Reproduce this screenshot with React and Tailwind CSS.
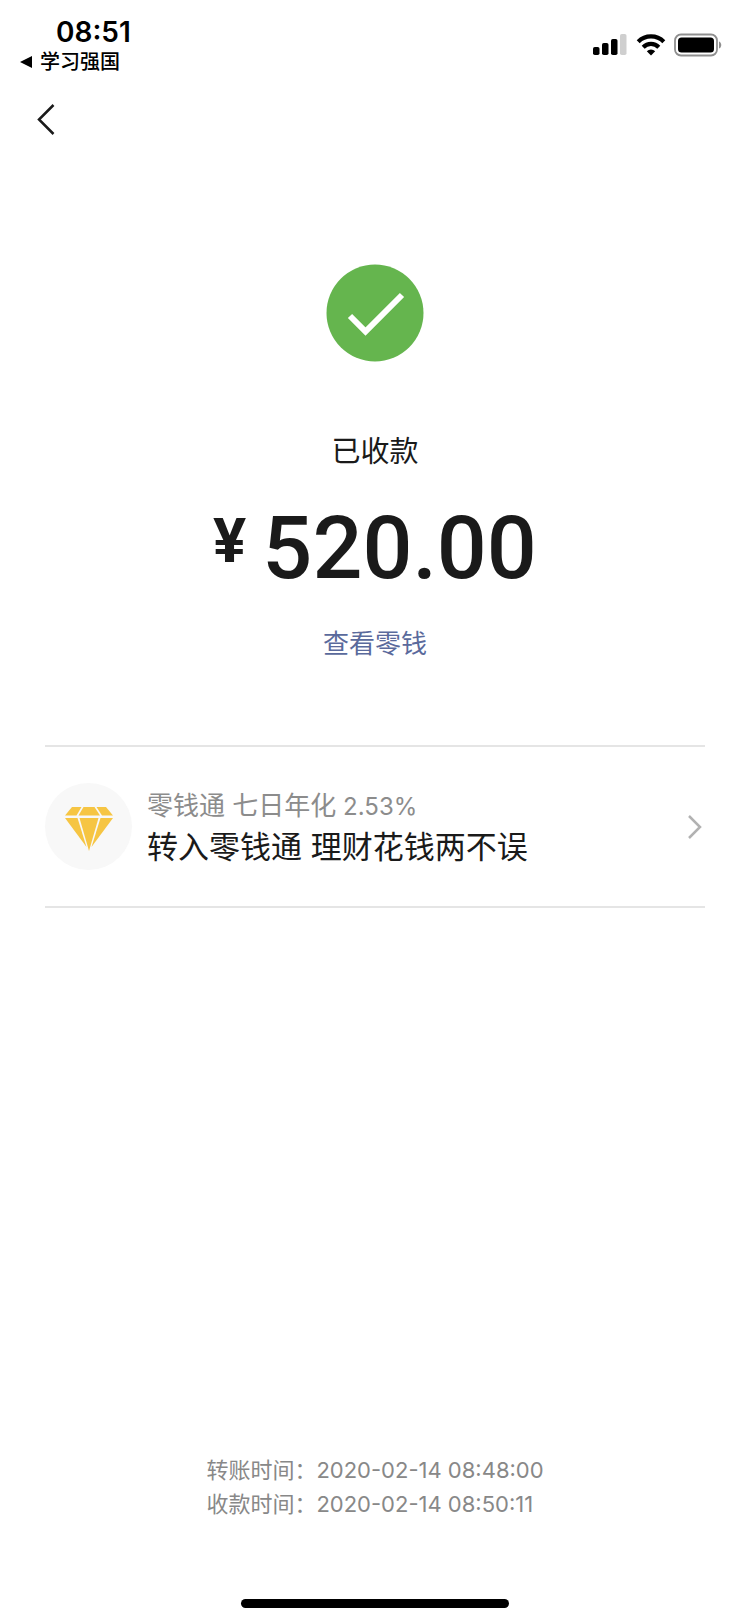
import React from 'react';

const times = [
    { label: '转账时间：', value: '2020-02-14 08:48:00' },
    { label: '收款时间：', value: '2020-02-14 08:50:11' },
];

const StatusBar = () => {
    return (
        <header className="flex items-start justify-between pl-5 pr-7 pt-4 text-black">
            <div>
                <div className="pl-9 text-[28px] leading-8 font-semibold">08:51</div>
                <a href="#back-to-app" className="flex items-center gap-2 text-[20px] leading-7 font-medium">
                    <svg width="12" height="14" viewBox="0 0 12 14" fill="currentColor">
                        <path d="M12 1v12L0 7z" />
                    </svg>
                    学习强国
                </a>
            </div>
            <div className="flex items-center gap-2 pt-[17px]">
                {/* signal */}
                <svg width="35" height="24" viewBox="0 0 35 24" fill="currentColor">
                    <rect x="0" y="14" width="6.5" height="8" rx="1.8" />
                    <rect x="9" y="10" width="6.5" height="12" rx="1.8" />
                    <rect x="18" y="6" width="6.5" height="16" rx="1.8" />
                    <rect x="27" y="1" width="6.5" height="21" rx="1.8" fill="#cfcfcf" />
                </svg>
                {/* wifi */}
                <svg width="30" height="24" viewBox="0 0 30 24" fill="none" stroke="currentColor" strokeWidth="4.2">
                    <path d="M2.2 8.7a18.200 18.200 0 0 1 25.600 0" />
                    <path d="M7.200 14.200a11 11 0 0 1 15.600 0" />
                    <path d="M15 22.500l-4.200-4.300a6.200 6.200 0 0 1 8.400 0z" fill="currentColor" stroke="none" />
                </svg>
                {/* battery */}
                <svg width="48" height="24" viewBox="0 0 48 24">
                    <rect x="1" y="1.5" width="42" height="21" rx="6" fill="none" stroke="#8f8f8f" strokeWidth="1.8" />
                    <rect x="4" y="4.5" width="36" height="15" rx="3.5" fill="currentColor" />
                    <path d="M45 8.5c3 1 3 6 0 7z" fill="#8f8f8f" />
                </svg>
            </div>
        </header>
    );
};

const Diamond = () => {
    return (
        <svg width="48" height="44" viewBox="0 0 48 44" fill="#f6c543">
            <path d="M7 0h9.5l-5 8.500H0z" />
            <path d="M18.500 0h11l5.500 8.500H13.500z" />
            <path d="M31.500 0H41l7 8.500H37z" />
            <path d="M0 11h12.500l9 29z" />
            <path d="M14.500 11h19L24 44z" />
            <path d="M35.500 11H48L26.500 40z" />
        </svg>
    );
};

const App = () => {
    return (
        <div className="flex min-h-screen flex-col bg-white font-[Inter,'Noto_Sans_CJK_SC',sans-serif] text-[#1a1a1a]">
            <StatusBar />

            <nav className="px-9 pt-6">
                <button type="button" aria-label="返回" className="block">
                    <svg width="20" height="40" viewBox="0 0 20 40" fill="none" stroke="currentColor" strokeWidth="2.5">
                        <path d="M17.500 5L3 19.500 17.500 34" />
                    </svg>
                </button>
            </nav>

            <main className="flex flex-col items-center px-[45px] pt-[124px]">
                <svg width="98" height="98" viewBox="0 0 98 98">
                    <circle cx="49" cy="49" r="48.5" fill="#65b54e" />
                    <path d="M24 52l15.500 15.500L76 31" fill="none" stroke="#fff" strokeWidth="6" />
                </svg>
                <h1 className="mt-[70px] text-[29px] leading-10">已收款</h1>
                <p className="mt-8 flex items-start gap-4 font-[Roboto,sans-serif] font-medium">
                    <span className="pt-[7px] text-[62px] leading-[60px] font-bold">¥</span>
                    <span className="text-[88px] leading-[88px]">520.00</span>
                </p>
                <a href="#balance" className="mt-8 text-[26px] leading-10 text-[#5a6a9c]">查看零钱</a>

                <a href="#lingqiantong" className="mt-[81px] flex w-full items-center border-y-2 border-[#e5e5e5] py-9">
                    <span className="flex size-[87px] items-center justify-center rounded-full bg-[#f8f8f8] pt-1">
                        <Diamond />
                    </span>
                    <span className="ml-[15px] flex flex-1 flex-col">
                        <span className="text-[26px] leading-10 text-[#8c8c8c]">
                            零钱通 七日年化
                            <span className="text-[24px]"> 2.53%</span>
                        </span>
                        <span className="text-[31px] leading-10">转入零钱通 理财花钱两不误</span>
                    </span>
                    <svg width="18" height="28" viewBox="0 0 18 28" fill="none" stroke="#b2b2b2" strokeWidth="2.5">
                        <path d="M2 3l11 11L2 25" />
                    </svg>
                </a>
            </main>

            <footer className="mt-auto flex flex-col items-center pb-[15px]">
                <dl className="text-[22px] leading-[34px] text-[#888888]">
                    {times.map((item) => (
                        <div key={item.label} className="flex">
                            <dt>{item.label}</dt>
                            <dd>{item.value}</dd>
                        </div>
                    ))}
                </dl>
                <div className="mt-[78px] h-[9px] w-[268px] rounded-full bg-black" />
            </footer>
        </div>
    );
};

export default App;
